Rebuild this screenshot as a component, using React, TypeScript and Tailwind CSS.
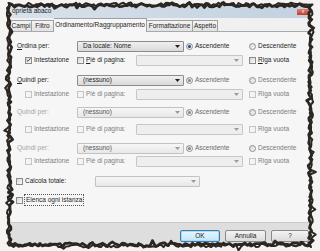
import React from "react";

const font = { fontFamily: '"Liberation Sans", Arial, sans-serif' };

function makeEdge(seed: number, L: number, T: number, R: number, B: number, amp: number) {
  let s = seed;
  const r = () => {
    s = (s * 16807) % 2147483647;
    return s / 2147483647;
  };
  const j = () => (r() - 0.5) * amp + (r() < 0.15 ? (r() - 0.5) * amp * 2 : 0);
  const pts: string[] = [];
  for (let x = L; x < R; x += 2.5) pts.push(`${x.toFixed(1)},${(T + j()).toFixed(1)}`);
  for (let y = T; y < B; y += 2.5) pts.push(`${(R + j()).toFixed(1)},${y.toFixed(1)}`);
  for (let x = R; x > L; x -= 2.5) pts.push(`${x.toFixed(1)},${(B + j()).toFixed(1)}`);
  for (let y = B; y > T; y -= 2.5) pts.push(`${(L + j()).toFixed(1)},${y.toFixed(1)}`);
  return "M" + pts.join(" L") + " Z";
}

function Check({ checked = false, disabled = false }: { checked?: boolean; disabled?: boolean }) {
  return (
    <span
      className={
        "w-[7px] h-[7px] shrink-0 border flex items-center justify-center " +
        (disabled
          ? "border-[#c4c4c4] bg-[#f4f4f4]"
          : "border-[#8a8a8a] bg-gradient-to-br from-[#d6d6d6] to-[#fbfbfb]")
      }
    >
      {checked && (
        <svg width="6" height="6" viewBox="0 0 6 6">
          <path d="M0.8 3 L2.4 4.6 L5.3 1" stroke="#333a55" strokeWidth="1.1" fill="none" />
        </svg>
      )}
    </span>
  );
}

function Radio({ on = false, dark = false }: { on?: boolean; dark?: boolean }) {
  return (
    <span className="w-[7px] h-[7px] shrink-0 rounded-full border border-[#8e8e8e] bg-gradient-to-br from-[#d4d4d4] to-[#fafafa] flex items-center justify-center">
      {on && <span className={"w-[3px] h-[3px] rounded-full " + (dark ? "bg-[#24466e]" : "bg-[#8a8a8a]")} />}
    </span>
  );
}

function Drop({ w, text, variant }: { w: string; text?: string; variant: "on" | "dis" | "box" }) {
  const cls =
    variant === "on"
      ? "border-[#8c8c8c] bg-gradient-to-b from-[#f0f0f0] to-[#d9d9d9] text-[#1e1e1e]"
      : variant === "dis"
      ? "border-[#c2c2c2] bg-gradient-to-b from-[#f6f6f6] to-[#e8e8e8] text-[#555]"
      : "border-[#c6c6c6] bg-[#eeeeee] text-[#555]";
  return (
    <div className={`${w} h-[11px] shrink-0 border rounded-[1px] flex items-center justify-between pl-[5px] pr-[3px] ${cls}`}>
      <span>{text ?? ""}</span>
      <svg width="5" height="3" viewBox="0 0 5 3">
        <path d="M0 0 H5 L2.5 3 Z" fill={variant === "on" ? "#222" : "#9a9a9a"} />
      </svg>
    </div>
  );
}

function SortRow({ label, text, labelDis, dropVar, dark, underline }: { label: string; text: string; labelDis?: boolean; dropVar: "on" | "dis"; dark?: boolean; underline?: boolean }) {
  return (
    <div className="h-[12px] flex items-center pl-[11px]">
      <span className={"w-[60px] shrink-0 " + (labelDis ? "text-[#a6a6a6]" : "text-[#1e1e1e]")}>
        {underline ? (
          <>
            <span className="underline">{label[0]}</span>
            {label.slice(1)}
          </>
        ) : (
          label
        )}
      </span>
      <Drop w="w-[107px]" text={text} variant={dropVar} />
      <div className="w-[63px] ml-[2px] flex items-center gap-[2px] shrink-0">
        <Radio on dark={dark} />
        <span className={dark ? "text-[#1e1e1e]" : "text-[#6a6a6a]"}>Ascendente</span>
      </div>
      <div className="flex items-center gap-[2px]">
        <Radio />
        <span className={dark ? "text-[#1e1e1e]" : "text-[#7a7a7a]"}>Descendente</span>
      </div>
    </div>
  );
}

function SubRow({ checked, dis }: { checked?: boolean; dis?: boolean }) {
  const t = dis ? "text-[#7e7e7e]" : "text-[#1e1e1e]";
  return (
    <div className="h-[12px] flex items-center pl-[19px]">
      <div className="w-[52px] shrink-0 flex items-center gap-[2px]">
        <Check checked={checked} disabled={dis} />
        <span className={t}>Intestazione</span>
      </div>
      <div className="w-[59px] shrink-0 flex items-center gap-[2px]">
        <Check disabled={dis} />
        <span className={t}>
          <span className={dis ? "" : "underline"}>P</span>iè di pagina:
        </span>
      </div>
      <Drop w="w-[107px]" variant="box" />
      <div className="ml-[6px] flex items-center gap-[2px]">
        <Check disabled={dis} />
        <span className={t}>
          <span className={dis ? "" : "underline"}>R</span>iga vuota
        </span>
      </div>
    </div>
  );
}

function Btn({ w, label, primary }: { w: string; label: string; primary?: boolean }) {
  return (
    <div
      className={
        `${w} h-[12px] rounded-[2px] border flex items-center justify-center text-[#222] ` +
        (primary
          ? "border-[#3d7bad] bg-gradient-to-b from-[#eaf6fd] to-[#bee6fd] shadow-[inset_0_0_0_1px_#a9dcf6]"
          : "border-[#8a8a8a] bg-gradient-to-b from-[#f3f3f3] to-[#dcdcdc]")
      }
    >
      {label}
    </div>
  );
}

export default function App() {
  const edge1 = makeEdge(777, 9.5, 5.5, 310, 244.5, 3);
  const edge2 = makeEdge(4242, 8.5, 4.5, 311, 245.5, 3.4);
  return (
    <div className="relative w-[320px] h-[251px] overflow-hidden bg-[#f4f3f1]" style={font}>
      <div className="ml-[6px] mt-[3px] w-[308px] h-[246px] bg-[#f0f0f0] flex flex-col text-[6.5px] leading-none text-[#1e1e1e]">
        {/* title bar */}
        <div className="h-[15px] shrink-0 flex items-center justify-between bg-gradient-to-r from-[#d9e2eb] via-[#cdd9e5] to-[#c2d1e0] pl-[6px] pr-[5px] pt-[2px]">
          <span className="text-[#1a1a1a]">oprietà abaco</span>
          <span className="w-[12px] h-[6px] bg-gradient-to-b from-[#e08070] to-[#c0392b] text-white text-[5px] flex items-center justify-center">x</span>
        </div>
        {/* tabs */}
        <div className="h-[14px] shrink-0 flex items-end pl-[4px] border-b border-[#a8a8a8]">
          <div className="w-[22px] h-[11px] border border-b-0 border-[#a0a0a0] bg-gradient-to-b from-[#f3f3f3] to-[#e2e2e2] flex items-center justify-center">Campi</div>
          <div className="w-[22px] h-[11px] border border-b-0 border-l-0 border-[#a0a0a0] bg-gradient-to-b from-[#f3f3f3] to-[#e2e2e2] flex items-center justify-center">Filtro</div>
          <div className="relative -mb-px w-[93px] h-[14px] border border-b-0 border-l-0 border-[#a0a0a0] bg-[#f6f6f6] flex items-center justify-center">Ordinamento/Raggruppamento</div>
          <div className="w-[46px] h-[11px] border border-b-0 border-l-0 border-[#a0a0a0] bg-gradient-to-b from-[#f3f3f3] to-[#e2e2e2] flex items-center justify-center">Formattazione</div>
          <div className="w-[25px] h-[11px] border border-b-0 border-l-0 border-[#a0a0a0] bg-gradient-to-b from-[#f3f3f3] to-[#e2e2e2] flex items-center justify-center">Aspetto</div>
        </div>
        {/* panel */}
        <div className="h-[191px] shrink-0 bg-[#f6f6f6] border-b border-[#c9c9c9] flex flex-col">
          <div className="mt-[8px]">
            <SortRow label="Ordina per:" text="Da locale: Nome" dropVar="on" dark underline />
          </div>
          <div className="mt-[2px]">
            <SubRow checked />
          </div>
          <div className="mt-[8px]">
            <SortRow label="Quindi per:" text="(nessuno)" dropVar="on" underline />
          </div>
          <div className="mt-[2px]">
            <SubRow dis />
          </div>
          <div className="mt-[6px]">
            <SortRow label="Quindi per:" text="(nessuno)" dropVar="dis" labelDis />
          </div>
          <div className="mt-[5px]">
            <SubRow dis />
          </div>
          <div className="mt-[7px]">
            <SortRow label="Quindi per:" text="(nessuno)" dropVar="dis" labelDis />
          </div>
          <div className="mt-[1px]">
            <SubRow dis />
          </div>
          <div className="mt-[8px] h-[12px] flex items-center pl-[10px]">
            <div className="w-[79px] shrink-0 flex items-center gap-[2px]">
              <Check />
              <span>Calcola totale:</span>
            </div>
            <Drop w="w-[105px]" variant="dis" />
          </div>
          <div className="mt-[7px] h-[12px] flex items-center pl-[10px]">
            <Check />
            <span className="ml-[1px] px-[1px] py-[2px] border border-dotted border-[#555]">Elenca ogni istanza</span>
          </div>
        </div>
        {/* bottom bar */}
        <div className="flex-1 bg-[#dedede] flex justify-end items-start pt-[7px] pr-[5px] gap-[5px]">
          <Btn w="w-[40px]" label="OK" primary />
          <Btn w="w-[41px]" label="Annulla" />
          <Btn w="w-[38px]" label="?" />
        </div>
      </div>
      <svg className="absolute inset-0 pointer-events-none" width="320" height="251" viewBox="0 0 320 251">
        <path d={"M0 0 H320 V251 H0 Z " + edge1} fill="#f4f3f1" fillRule="evenodd" />
        <path d={edge2} fill="none" stroke="#2b2622" strokeWidth="2" strokeLinejoin="round" />
        <path d={edge1} fill="none" stroke="#2b2622" strokeWidth="2.8" strokeLinejoin="round" />
      </svg>
    </div>
  );
}
